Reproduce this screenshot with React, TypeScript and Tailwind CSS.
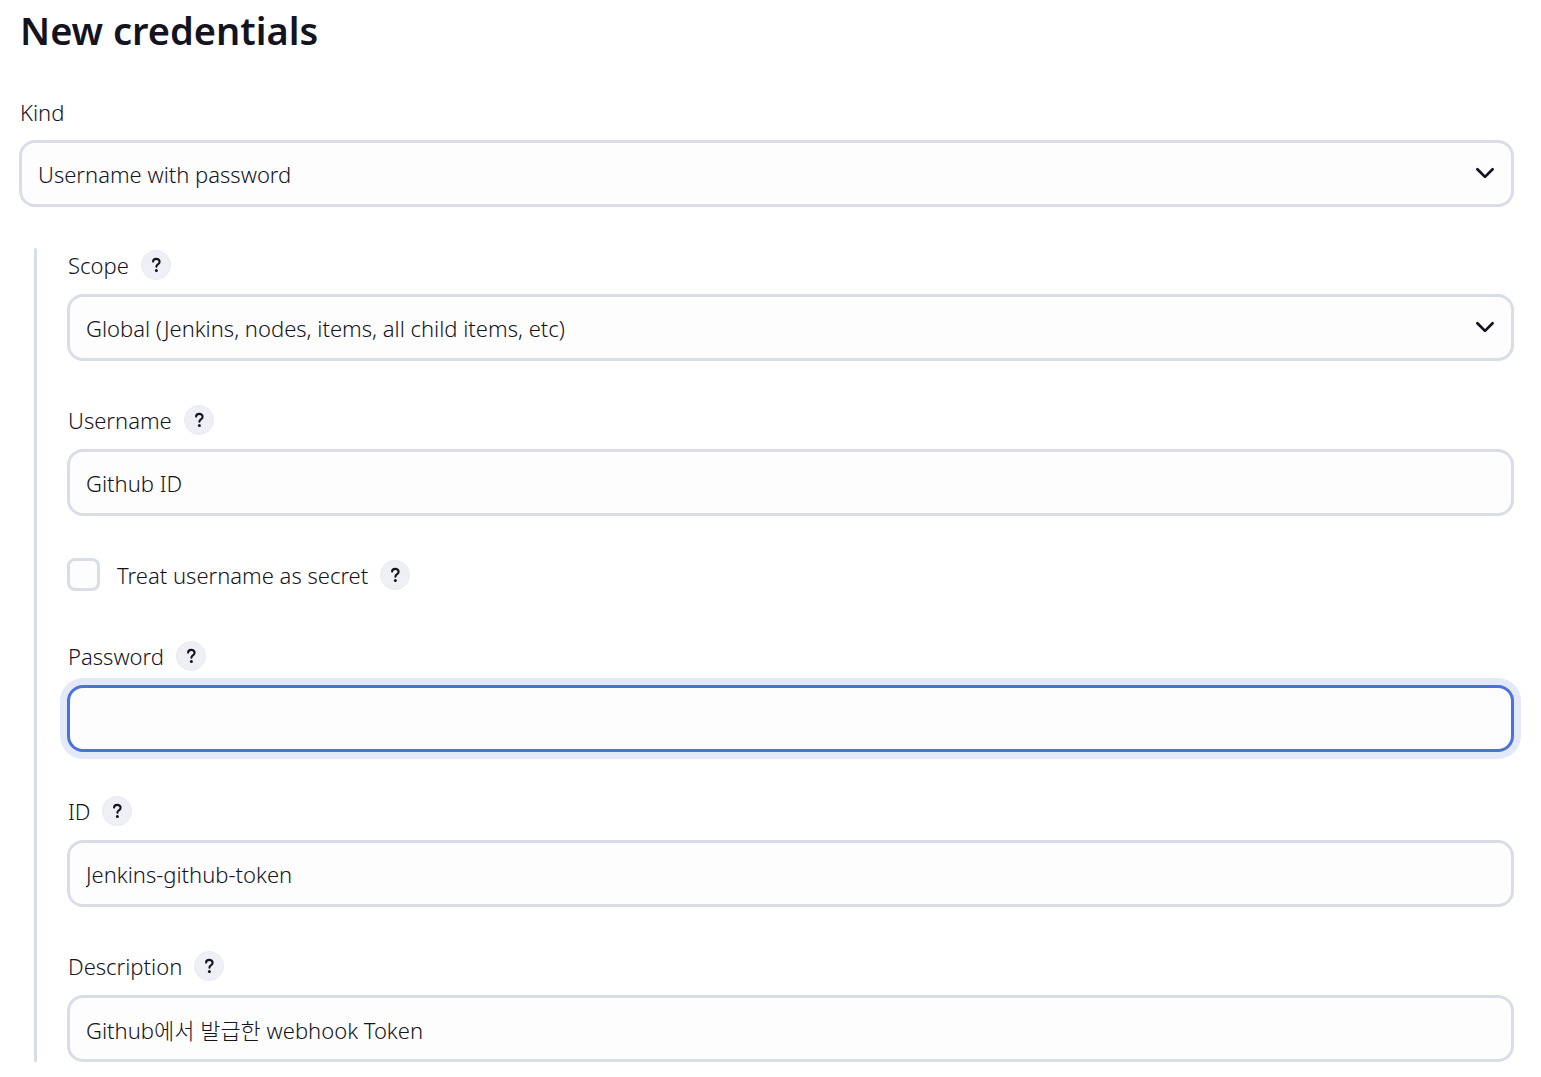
import * as React from "react";
import { clsx } from "clsx";

const fieldClass =
  "block h-[67px] w-full appearance-none rounded-2xl border-3 bg-[#fdfdfd] px-4 text-[22px] font-light text-[#14141f] outline-none";

const idleClass = "border-[#d9dde6]";
const focusedClass = "border-[#4b70e0] ring-7 ring-[#e3e9f9]";

const ChevronIcon = () => (
  <svg
    viewBox="0 0 20 12"
    className="pointer-events-none absolute top-[27px] right-[19px] h-3 w-5"
    fill="none"
    stroke="#14141f"
    strokeWidth="2.7"
    strokeLinecap="round"
    strokeLinejoin="round"
    aria-hidden="true"
  >
    <path d="M2.4 2.3 10 9.9l7.6-7.6" />
  </svg>
);

const HelpButton = ({ label }: { label: string }) => (
  <button
    type="button"
    aria-label={`Help for feature: ${label}`}
    className="flex size-[30px] shrink-0 items-center justify-center rounded-full border border-[#e9eaf0] bg-[#eff0f5]"
  >
    <svg
      viewBox="0 0 12 16"
      className="h-4 w-3"
      fill="none"
      stroke="#14141f"
      strokeWidth="2.1"
      strokeLinecap="round"
      strokeLinejoin="round"
      aria-hidden="true"
    >
      <path d="M3.1 4.6C3.1 2.8 4.5 1.9 6.3 1.9s3.3 1 3.3 2.8c0 1.4-.8 2-1.8 2.7-.9.6-1.4 1.1-1.4 2.3" />
      <circle cx="6.4" cy="13.4" r="1.5" fill="#14141f" stroke="none" />
    </svg>
  </button>
);

interface SelectFieldProps {
  id: string;
  options: string[];
}

const SelectField = ({ id, options }: SelectFieldProps) => (
  <div className="relative">
    <select id={id} className={clsx(fieldClass, idleClass)}>
      {options.map((option) => (
        <option key={option}>{option}</option>
      ))}
    </select>
    <ChevronIcon />
  </div>
);

interface FormRowProps {
  id: string;
  label: string;
  children: React.ReactNode;
}

const FormRow = ({ id, label, children }: FormRowProps) => (
  <div>
    <div className="mb-3 flex h-[34px] items-center gap-3 pl-px">
      <label htmlFor={id}>{label}</label>
      <HelpButton label={label} />
    </div>
    {children}
  </div>
);

export default function App() {
  return (
    <main className="min-h-screen bg-white pt-2 pr-[27px] pb-4 pl-[19px] font-['Noto_Sans','Noto_Sans_CJK_KR',sans-serif] text-[22px] leading-8 font-light text-[#14141f]">
      <h1 className="pl-px text-[38px] leading-11 font-semibold">New credentials</h1>

      <form onSubmit={(e) => e.preventDefault()}>
        <div className="mt-11">
          <label htmlFor="kind" className="mb-3 block pl-px">
            Kind
          </label>
          <SelectField id="kind" options={["Username with password"]} />
        </div>

        <div className="mt-[41px] ml-[15px] flex">
          <div className="w-[3px] shrink-0 rounded-full bg-[#d9dde6]" />
          <div className="ml-[30px] flex min-w-0 flex-1 flex-col gap-[42px]">
            <FormRow id="scope" label="Scope">
              <SelectField
                id="scope"
                options={["Global (Jenkins, nodes, items, all child items, etc)"]}
              />
            </FormRow>

            <FormRow id="username" label="Username">
              <input
                id="username"
                type="text"
                defaultValue="Github ID"
                className={clsx(fieldClass, idleClass)}
              />
            </FormRow>

            <div className="mb-[6px] flex h-[33px] items-center">
              <input
                id="secret"
                type="checkbox"
                className="mr-[17px] size-[33px] appearance-none rounded-lg border-3 border-[#d9dde6] bg-[#fdfdfd] checked:bg-[#4b70e0]"
              />
              <label htmlFor="secret" className="mr-3">
                Treat username as secret
              </label>
              <HelpButton label="Treat username as secret" />
            </div>

            <FormRow id="password" label="Password">
              <input id="password" type="password" className={clsx(fieldClass, focusedClass)} />
            </FormRow>

            <FormRow id="id" label="ID">
              <input
                id="id"
                type="text"
                defaultValue="Jenkins-github-token"
                className={clsx(fieldClass, idleClass)}
              />
            </FormRow>

            <FormRow id="description" label="Description">
              <input
                id="description"
                type="text"
                defaultValue="Github에서 발급한 webhook Token"
                className={clsx(fieldClass, idleClass)}
              />
            </FormRow>
          </div>
        </div>
      </form>
    </main>
  );
}
